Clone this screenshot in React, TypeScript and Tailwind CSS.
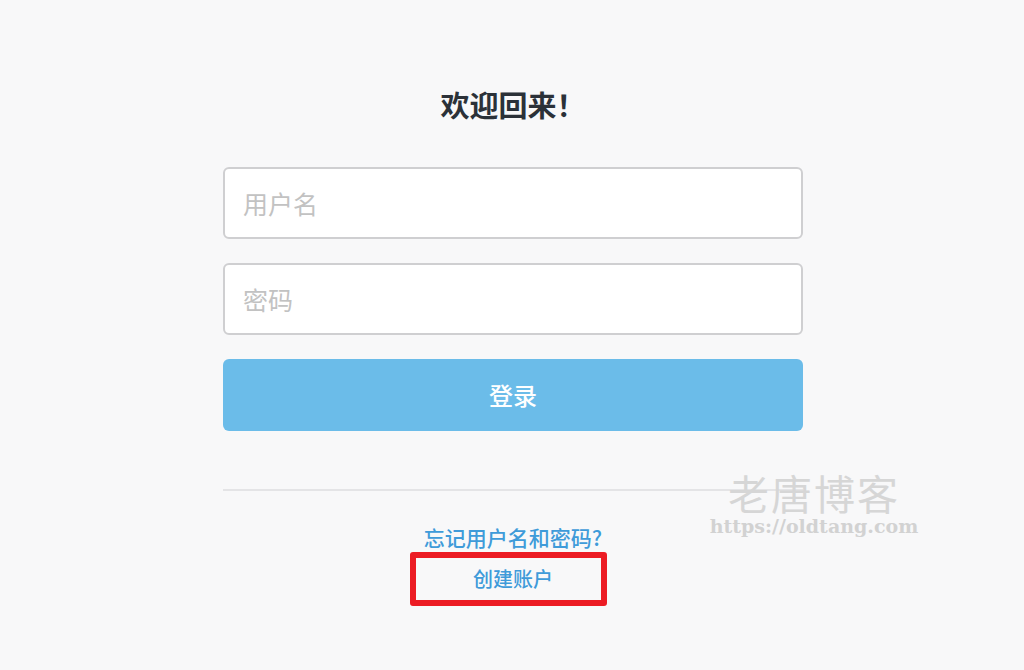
import React from 'react';

const cjk = "font-['Noto_Sans_CJK_SC','Noto_Sans',sans-serif]";

export default function App() {
  const [user, setUser] = React.useState('');
  const [pass, setPass] = React.useState('');

  return (
    <div className={`relative min-h-[670px] w-full bg-[#f8f8f9] ${cjk}`}>
      <div className="ml-[223px] flex w-[580px] flex-col pt-[84px]">
        <h1 className="text-center text-[29px] font-bold leading-[40px] text-[#2b3138]">
          欢迎回来！
        </h1>

        <div className="mt-[43px] flex flex-col gap-6">
          <input
            type="text"
            placeholder="用户名"
            value={user}
            onChange={e => setUser(e.target.value)}
            className="h-[72px] w-full rounded-md border-2 border-[#cfcfd1] bg-white px-[18px] text-[25px] text-[#333] placeholder-[#c2c2c2] focus:outline-none"
          />
          <input
            type="password"
            placeholder="密码"
            value={pass}
            onChange={e => setPass(e.target.value)}
            className="h-[72px] w-full rounded-md border-2 border-[#cfcfd1] bg-white px-[18px] text-[25px] text-[#333] placeholder-[#c2c2c2] focus:outline-none"
          />
          <button className="h-[72px] w-full rounded-md bg-[#6bbce9] text-[24px] font-medium leading-[66px] text-white">
            登录
          </button>
        </div>

        <div className="mt-[58px] h-[2px] w-full bg-[#e4e4e6]" />

        <div className="mt-[32px] flex flex-col items-center">
          <a href="#" className="text-[21px] font-medium leading-[28px] text-[#3f9bd9]">
            忘记用户名和密码?
          </a>
          <div className="mt-[1px] flex h-[54px] w-[197px] -translate-x-[5px] items-center justify-center rounded-[3px] border-[6px] border-[#ec1c24]">
            <a href="#" className="translate-x-[5px] text-[20px] font-medium text-[#3f9bd9]">
              创建账户
            </a>
          </div>
        </div>
      </div>

      {/* 水印 */}
      <div className="pointer-events-none absolute left-[708px] top-[471px] flex w-[212px] flex-col items-center gap-[3px]">
        <span className="text-[41px] leading-[42px] tracking-[2px] text-[#d6d6d6]">老唐博客</span>
        <span className="font-['DejaVu_Serif',serif] text-[19px] font-bold leading-[20px] text-[#d2d2d2]">
          https://oldtang.com
        </span>
      </div>
    </div>
  );
}
